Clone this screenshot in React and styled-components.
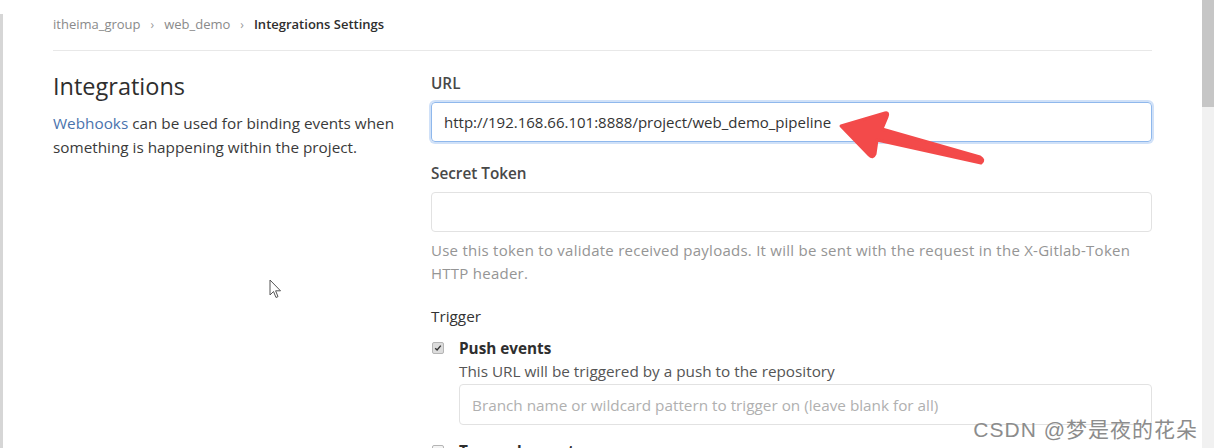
import React from 'react';
import styled, { createGlobalStyle } from 'styled-components';

const GlobalStyle = createGlobalStyle`
  html, body {
    margin: 0;
    padding: 0;
    background: #fff;
    overflow: hidden;
  }
  body {
    font-family: "Open Sans", "Noto Sans", sans-serif;
    color: #2e2e2e;
  }
`;

const Page = styled.div`
  display: flex;
  height: 448px;
  position: relative;
  overflow: hidden;
`;

const Main = styled.div`
  flex: 1;
  border-left: 3px solid #d6d6d6;
  padding: 0 50px;
  margin-top: 14px;
`;

const Scrollbar = styled.div`
  width: 12px;
  background: #f1f1f1;
  display: flex;
  flex-direction: column;
`;

const Thumb = styled.div`
  height: 107px;
  background: #c6c6c6;
`;

const Breadcrumbs = styled.nav`
  display: flex;
  align-items: center;
  gap: 10px;
  font-size: 13px;
  height: 22px;
  padding-bottom: 15px;
  border-bottom: 1px solid #e8e8e8;
  margin-top: -1px;
`;

const Crumb = styled.span`
  color: ${p => (p.current ? '#2e2e2e' : '#8a8a8a')};
  font-weight: ${p => (p.current ? 600 : 400)};
`;

const Chevron = styled.span`
  color: #9a9a9a;
  font-size: 12px;
`;

const Layout = styled.div`
  display: grid;
  grid-template-columns: 348px 1fr;
  column-gap: 30px;
  padding-top: 22px;
`;

const Aside = styled.div``;

const Title = styled.h4`
  margin: -2px 0 0;
  font-size: 23.5px;
  font-weight: 400;
  color: #2e2e2e;
  line-height: 30px;
`;

const Lead = styled.p`
  margin: 10px 0 0;
  font-size: 15.3px;
  line-height: 24px;
  color: #3a3a3a;
`;

const Link = styled.a`
  color: #4a73ad;
  text-decoration: none;
`;

const Form = styled.div`
  display: flex;
  flex-direction: column;
`;

const Group = styled.div`
  margin-bottom: ${p => p.mb || 21}px;
`;

const Label = styled.div`
  font-size: 15.3px;
  font-weight: ${p => (p.light ? 400 : 600)};
  color: ${p => (p.light ? '#333' : '#484848')};
  line-height: 20px;
  margin-bottom: ${p => p.mb || 9}px;
`;

const Input = styled.div`
  box-sizing: border-box;
  height: ${p => p.h || 40}px;
  border: 1px solid ${p => (p.focus ? '#8fb8ec' : '#e2e2e2')};
  box-shadow: ${p => (p.focus ? '0 0 0 2px rgba(120, 170, 235, 0.35)' : 'none')};
  border-radius: 4px;
  padding: 0 12px;
  display: flex;
  align-items: center;
  font-size: ${p => (p.focus ? 15 : 15.3)}px;
  color: ${p => (p.placeholder ? '#b0b0b0' : '#333')};
`;

const Help = styled.p`
  margin: 7px 0 0;
  font-size: 15px;
  letter-spacing: 0.25px;
  line-height: 23px;
  color: #959595;
`;

const CheckRow = styled.div`
  display: grid;
  grid-template-columns: 28px 1fr;
  align-items: start;
  margin-bottom: 15px;
`;

const Box = styled.span`
  box-sizing: border-box;
  width: 12px;
  height: 12px;
  margin-top: 5px;
  margin-left: 1px;
  border-radius: 2px;
  border: 1px solid #b5b5b5;
  background: ${p => (p.checked ? '#dcdcdc' : '#f4f4f4')};
  display: flex;
  align-items: center;
  justify-content: center;
`;

const CheckBody = styled.div`
  display: flex;
  flex-direction: column;
`;

const CheckTitle = styled.div`
  font-size: 15.3px;
  font-weight: 700;
  color: #2e2e2e;
  line-height: 22px;
`;

const CheckDesc = styled.div`
  font-size: 15.3px;
  color: #555;
  line-height: 24px;
  margin-bottom: 1px;
`;

const Arrow = styled.svg`
  position: absolute;
  left: 836px;
  top: 108px;
`;

const Cursor = styled.svg`
  position: absolute;
  left: 269px;
  top: 279px;
`;

const Watermark = styled.div`
  position: absolute;
  right: 16px;
  bottom: 5px;
  font-family: "Liberation Sans", "Noto Sans CJK SC", sans-serif;
  font-size: 21px;
  color: #8c8c8c;
  letter-spacing: 1px;
`;

const Checkbox = ({ checked }) => (
  <Box checked={checked}>
    {checked && (
      <svg width="8" height="8" viewBox="0 0 8 8">
        <path d="M1.2 4.2 L3.1 6 L6.8 1.6" fill="none" stroke="#333" strokeWidth="1.4" />
      </svg>
    )}
  </Box>
);

export default function App() {
  return (
    <Page>
      <GlobalStyle />
      <Main>
        <Breadcrumbs>
          <Crumb>itheima_group</Crumb>
          <Chevron>›</Chevron>
          <Crumb>web_demo</Crumb>
          <Chevron>›</Chevron>
          <Crumb current>Integrations Settings</Crumb>
        </Breadcrumbs>
        <Layout>
          <Aside>
            <Title>Integrations</Title>
            <Lead>
              <Link>Webhooks</Link> can be used for binding events when something is happening within the project.
            </Lead>
          </Aside>
          <Form>
            <Group>
              <Label>URL</Label>
              <Input focus>http://192.168.66.101:8888/project/web_demo_pipeline</Input>
            </Group>
            <Group mb={21}>
              <Label>Secret Token</Label>
              <Input />
              <Help>
                Use this token to validate received payloads. It will be sent with the request in the X-Gitlab-Token HTTP header.
              </Help>
            </Group>
            <Label light mb={11}>Trigger</Label>
            <CheckRow>
              <Checkbox checked />
              <CheckBody>
                <CheckTitle>Push events</CheckTitle>
                <CheckDesc>This URL will be triggered by a push to the repository</CheckDesc>
                <Input placeholder h={41}>Branch name or wildcard pattern to trigger on (leave blank for all)</Input>
              </CheckBody>
            </CheckRow>
            <CheckRow>
              <Checkbox />
              <CheckBody>
                <CheckTitle>Tag push events</CheckTitle>
              </CheckBody>
            </CheckRow>
          </Form>
        </Layout>
      </Main>
      <Scrollbar>
        <Thumb />
      </Scrollbar>
      <Arrow width="150" height="62" viewBox="836 108 150 62">
        <path
          d="M841 126 L885 113 Q889 112 887 117 L882 129 L980 157 Q985 160 981 163 L877 140 L875 154 Q873 159 869 155 Z"
          fill="#f34a4a"
          stroke="#f34a4a"
          strokeWidth="3"
          strokeLinejoin="round"
        />
      </Arrow>
      <Cursor width="14" height="22" viewBox="0 0 14 22">
        <path d="M1 1 L1 16 L4.5 12.5 L7 18.5 L9 17.6 L6.6 11.8 L11.5 11.8 Z" fill="#fff" stroke="#555" strokeWidth="1" strokeLinejoin="round" />
      </Cursor>
      <Watermark>CSDN @梦是夜的花朵</Watermark>
    </Page>
  );
}
